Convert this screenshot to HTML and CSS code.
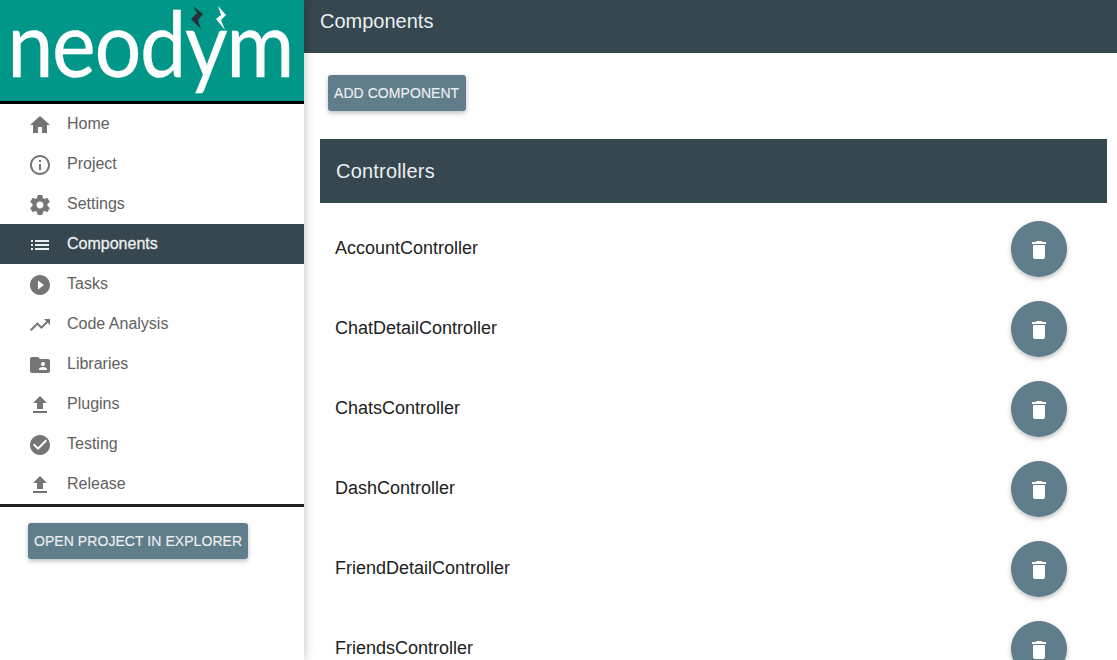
FILE: index.html
```html
<!DOCTYPE html>
<html lang="en">
<head>
    <meta charset="UTF-8">
    <meta name="viewport" content="width=device-width, initial-scale=1.0">
    <title>Neodym - Components</title>
    <link rel="stylesheet" href="styles.css">
</head>
<body>
    <svg class="icon-defs" aria-hidden="true">
        <symbol id="icon-delete" viewBox="0 0 24 24"><path d="M6 19c0 1.1.9 2 2 2h8c1.1 0 2-.9 2-2V7H6v12zM19 4h-3.5l-1-1h-5l-1 1H5v2h14V4z"/></symbol>
        <symbol id="icon-upload" viewBox="0 0 24 24"><path d="M9 16h6v-6h4l-7-7-7 7h4zm-4 2h14v2H5z"/></symbol>
    </svg>

    <!-- Sidebar -->
    <aside class="sidebar">
        <div class="logo">
            <span class="logo-text">neodym</span>
            <svg class="logo-bolt bolt-dark" viewBox="0 0 12 24"><path d="M2 0L12 8 7 14 10 23 0 13 6 7z"/></svg>
            <svg class="logo-bolt bolt-light" viewBox="0 0 12 24"><path d="M2 0L10 9 5 14 9 24 0 13 5 9z"/></svg>
        </div>
        <nav class="menu">
            <a class="menu-item"><svg class="menu-icon" viewBox="0 0 24 24"><path d="M10 20v-6h4v6h5v-8h3L12 3 2 12h3v8z"/></svg>Home</a>
            <a class="menu-item"><svg class="menu-icon" viewBox="0 0 24 24"><path d="M11 17h2v-6h-2v6zm1-15C6.48 2 2 6.48 2 12s4.48 10 10 10 10-4.48 10-10S17.52 2 12 2zm0 18c-4.41 0-8-3.59-8-8s3.59-8 8-8 8 3.59 8 8-3.59 8-8 8zM11 9h2V7h-2v2z"/></svg>Project</a>
            <a class="menu-item"><svg class="menu-icon" viewBox="0 0 24 24"><path d="M19.43 12.98c.04-.32.07-.64.07-.98s-.03-.66-.07-.98l2.11-1.65c.19-.15.24-.42.12-.64l-2-3.46c-.12-.22-.39-.3-.61-.22l-2.49 1c-.52-.4-1.08-.73-1.69-.98l-.38-2.65C14.46 2.18 14.25 2 14 2h-4c-.25 0-.46.18-.49.42l-.38 2.65c-.61.25-1.17.59-1.69.98l-2.49-1c-.23-.09-.49 0-.61.22l-2 3.46c-.13.22-.07.49.12.64l2.11 1.65c-.04.32-.07.65-.07.98s.03.66.07.98l-2.11 1.65c-.19.15-.24.42-.12.64l2 3.46c.12.22.39.3.61.22l2.49-1c.52.4 1.08.73 1.69.98l.38 2.65c.03.24.24.42.49.42h4c.25 0 .46-.18.49-.42l.38-2.65c.61-.25 1.17-.59 1.69-.98l2.49 1c.23.09.49 0 .61-.22l2-3.46c.12-.22.07-.49-.12-.64l-2.11-1.65zM12 15.5c-1.93 0-3.5-1.57-3.5-3.5s1.57-3.5 3.5-3.5 3.5 1.57 3.5 3.5-1.57 3.5-3.5 3.5z"/></svg>Settings</a>
            <a class="menu-item active"><svg class="menu-icon" viewBox="0 0 24 24"><path d="M3 13h2v-2H3v2zm0 4h2v-2H3v2zm0-8h2V7H3v2zm4 4h14v-2H7v2zm0 4h14v-2H7v2zM7 7v2h14V7H7z"/></svg>Components</a>
            <a class="menu-item"><svg class="menu-icon" viewBox="0 0 24 24"><path d="M12 2C6.48 2 2 6.48 2 12s4.48 10 10 10 10-4.48 10-10S17.52 2 12 2zm-2 14.5v-9l6 4.5-6 4.5z"/></svg>Tasks</a>
            <a class="menu-item"><svg class="menu-icon" viewBox="0 0 24 24"><path d="M16 6l2.29 2.29-4.88 4.88-4-4L2 16.59 3.41 18l6-6 4 4 6.3-6.29L22 12V6z"/></svg>Code Analysis</a>
            <a class="menu-item"><svg class="menu-icon" viewBox="0 0 24 24"><path d="M20 6h-8l-2-2H4c-1.1 0-1.99.9-1.99 2L2 18c0 1.1.9 2 2 2h16c1.1 0 2-.9 2-2V8c0-1.1-.9-2-2-2zm-5 3c1.1 0 2 .9 2 2s-.9 2-2 2-2-.9-2-2 .9-2 2-2zm4 8h-8v-1c0-1.33 2.67-2 4-2s4 .67 4 2v1z"/></svg>Libraries</a>
            <a class="menu-item"><svg class="menu-icon"><use href="#icon-upload"/></svg>Plugins</a>
            <a class="menu-item"><svg class="menu-icon" viewBox="0 0 24 24"><path d="M12 2C6.48 2 2 6.48 2 12s4.48 10 10 10 10-4.48 10-10S17.52 2 12 2zm-2 15l-5-5 1.41-1.41L10 14.17l7.59-7.59L19 8l-9 9z"/></svg>Testing</a>
            <a class="menu-item"><svg class="menu-icon"><use href="#icon-upload"/></svg>Release</a>
        </nav>
        <div class="sidebar-actions">
            <button class="btn" type="button">Open project in explorer</button>
        </div>
    </aside>

    <!-- Main content -->
    <div class="content">
        <header class="toolbar">Components</header>
        <main class="page">
            <button class="btn add-btn" type="button">Add component</button>
            <section class="group">
                <h2 class="group-title">Controllers</h2>
                <ul class="component-list">
                    <li class="component"><span>AccountController</span><button class="fab" type="button" aria-label="Delete"><svg class="fab-icon"><use href="#icon-delete"/></svg></button></li>
                    <li class="component"><span>ChatDetailController</span><button class="fab" type="button" aria-label="Delete"><svg class="fab-icon"><use href="#icon-delete"/></svg></button></li>
                    <li class="component"><span>ChatsController</span><button class="fab" type="button" aria-label="Delete"><svg class="fab-icon"><use href="#icon-delete"/></svg></button></li>
                    <li class="component"><span>DashController</span><button class="fab" type="button" aria-label="Delete"><svg class="fab-icon"><use href="#icon-delete"/></svg></button></li>
                    <li class="component"><span>FriendDetailController</span><button class="fab" type="button" aria-label="Delete"><svg class="fab-icon"><use href="#icon-delete"/></svg></button></li>
                    <li class="component"><span>FriendsController</span><button class="fab" type="button" aria-label="Delete"><svg class="fab-icon"><use href="#icon-delete"/></svg></button></li>
                </ul>
            </section>
        </main>
    </div>
</body>
</html>
```

FILE: styles.css
```css
/* General */
html, body {
    height: 100%;
    overflow: hidden;
}

body {
    display: flex;
    margin: 0;
    font-family: "Liberation Sans", Arial, sans-serif;
    background: #fff;
    color: #212121;
}

.icon-defs {
    display: none;
}

/* Sidebar */
.sidebar {
    flex: 0 0 304px;
    width: 304px;
    position: relative;
    z-index: 2;
    background: #fff;
    box-shadow: 0 0 10px rgba(0, 0, 0, 0.26);
}

.logo {
    position: relative;
    height: 101px;
    background: #009688;
    border-bottom: 3px solid #000;
}

.logo-text {
    display: block;
    width: 300px;
    padding-left: 8px;
    font-family: Lato, sans-serif;
    font-size: 92px;
    line-height: 84px;
    letter-spacing: -1.5px;
    white-space: nowrap;
    color: #fff;
    -webkit-text-stroke: 0.3px #fff;
    transform: scaleX(0.9);
    transform-origin: left top;
}

.logo-bolt {
    position: absolute;
    top: 6px;
    width: 12px;
    height: 24px;
}

.bolt-dark {
    left: 191px;
    fill: #263238;
}

.bolt-light {
    left: 216px;
    fill: #fff;
}

.menu {
    border-bottom: 3px solid #212121;
}

.menu-item {
    display: flex;
    align-items: center;
    height: 40px;
    padding-left: 28px;
    font-size: 16px;
    color: #616161;
}

.menu-icon {
    flex: none;
    width: 24px;
    height: 24px;
    margin: 2px 15px 0 0;
    fill: #757575;
}

.menu-item.active {
    background: #37474f;
    color: #eceff1;
    -webkit-text-stroke: 0.3px #eceff1;
}

.menu-item.active .menu-icon {
    fill: #eceff1;
}

.sidebar-actions {
    padding: 16px 28px;
}

/* Buttons */
.btn {
    display: block;
    height: 36px;
    padding: 0 6px;
    border: none;
    border-radius: 3px;
    background: #607d8b;
    color: #eceff1;
    font-family: inherit;
    font-size: 14px;
    letter-spacing: 0.06px;
    text-transform: uppercase;
    white-space: nowrap;
    -webkit-text-stroke: 0.15px #eceff1;
    box-shadow: 0 2px 5px rgba(0, 0, 0, 0.26);
}

.fab {
    display: flex;
    align-items: center;
    justify-content: center;
    width: 56px;
    height: 56px;
    margin-top: 2px;
    padding: 2px 0 0;
    border: none;
    border-radius: 50%;
    background: #607d8b;
    box-shadow: 0 2px 5px rgba(0, 0, 0, 0.26);
}

.fab-icon {
    width: 24px;
    height: 24px;
    fill: #fff;
}

/* Main content */
.content {
    flex: 1;
    min-width: 0;
}

.toolbar {
    height: 53px;
    padding: 10px 16px 0;
    box-sizing: border-box;
    background: #37474f;
    color: #eceff1;
    font-size: 20px;
    line-height: 23px;
}

.page {
    padding: 22px 10px 0 16px;
}

.add-btn {
    margin-left: 8px;
    padding-right: 7px;
}

.group {
    margin-top: 28px;
}

.group-title {
    margin: 0;
    height: 64px;
    padding-left: 16px;
    background: #37474f;
    color: #eceff1;
    font-size: 20px;
    font-weight: normal;
    line-height: 64px;
    letter-spacing: 0.2px;
}

.component-list {
    margin: 0;
    padding: 5px 0 0;
    list-style: none;
}

.component {
    display: flex;
    align-items: center;
    justify-content: space-between;
    height: 80px;
    padding: 0 40px 0 15px;
    font-size: 18px;
}
```
